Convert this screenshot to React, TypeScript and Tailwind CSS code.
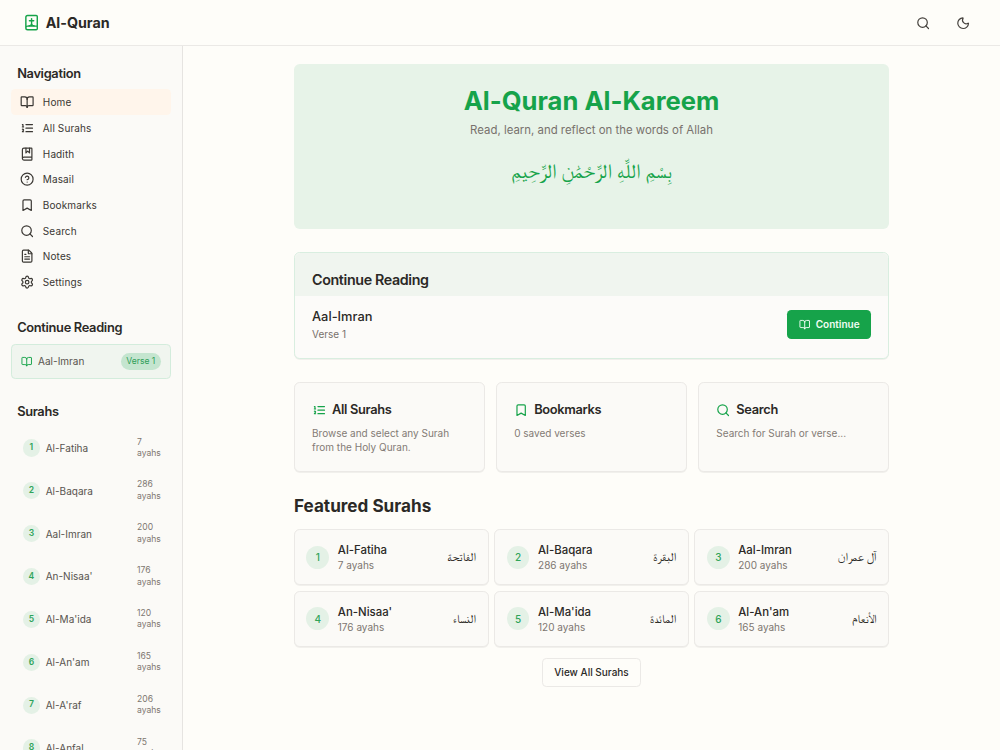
import type { ReactNode } from 'react';
import {
  BookMarked,
  BookOpen,
  Bookmark,
  CircleHelp,
  FileText,
  Moon,
  Search,
  Settings,
} from 'lucide-react';
import { clsx } from 'clsx';

type Icon = (props: { className?: string }) => ReactNode;

interface Surah {
  id: number;
  name: string;
  arabic: string;
  ayahs: number;
}

const SURAHS: Surah[] = [
  { id: 1, name: 'Al-Fatiha', arabic: 'الفاتحة', ayahs: 7 },
  { id: 2, name: 'Al-Baqara', arabic: 'البقرة', ayahs: 286 },
  { id: 3, name: 'Aal-Imran', arabic: 'آل عمران', ayahs: 200 },
  { id: 4, name: "An-Nisaa'", arabic: 'النساء', ayahs: 176 },
  { id: 5, name: "Al-Ma'ida", arabic: 'المائدة', ayahs: 120 },
  { id: 6, name: "Al-An'am", arabic: 'الأنعام', ayahs: 165 },
  { id: 7, name: "Al-A'raf", arabic: 'الأعراف', ayahs: 206 },
  { id: 8, name: 'Al-Anfal', arabic: 'الأنفال', ayahs: 75 },
];

function NumberedList({ className }: { className?: string }) {
  return (
    <svg
      viewBox="0 0 24 24"
      className={className}
      fill="none"
      stroke="currentColor"
      strokeWidth="2"
      strokeLinecap="round"
      strokeLinejoin="round"
    >
      <path d="M10 6h11M10 12h11M10 18h11" />
      <path d="M4 6h1v4M4 10h2" />
      <path d="M6 18H4c0-1 2-2 2-3s-1-1.500-2-1" />
    </svg>
  );
}

const NAV_ITEMS: { label: string; icon: Icon }[] = [
  { label: 'Home', icon: (p) => <BookOpen {...p} /> },
  { label: 'All Surahs', icon: NumberedList },
  { label: 'Hadith', icon: (p) => <BookMarked {...p} /> },
  { label: 'Masail', icon: (p) => <CircleHelp {...p} /> },
  { label: 'Bookmarks', icon: (p) => <Bookmark {...p} /> },
  { label: 'Search', icon: (p) => <Search {...p} /> },
  { label: 'Notes', icon: (p) => <FileText {...p} /> },
  { label: 'Settings', icon: (p) => <Settings {...p} /> },
];

function Logo() {
  return (
    <svg
      viewBox="0 0 24 24"
      className="size-6 text-[#16a34a]"
      fill="none"
      stroke="currentColor"
      strokeWidth="2"
      strokeLinecap="round"
      strokeLinejoin="round"
    >
      <path d="M4 19.5v-15A2.5 2.5 0 0 1 6.500 2H18.500A1.500 1.500 0 0 1 20 3.500v17a1.500 1.500 0 0 1-1.500 1.500H6.500a2.5 2.5 0 0 1 0-5H20" />
      <path d="M12 6.5V16" />
      <path d="M9 9.500h6" />
      <path d="M8.500 16.500c1.500 0 2.500-.8 3.500-2 1 1.200 2 2 3.500 2" />
    </svg>
  );
}

function Header() {
  return (
    <header className="flex h-[46.400px] shrink-0 items-center justify-between border-b border-[#ebe9e6] px-8">
      <div className="flex items-center gap-2">
        <Logo />
        <span className="text-xl font-bold">Al-Quran</span>
      </div>
      <div className="flex gap-4 text-[#44403c]">
        <button className="flex size-10 items-center justify-center">
          <Search className="size-5" />
        </button>
        <button className="flex size-10 items-center justify-center">
          <Moon className="size-5" />
        </button>
      </div>
    </header>
  );
}

function SidebarTitle({ children }: { children: ReactNode }) {
  return <h2 className="mb-2 px-2 text-lg font-semibold tracking-tight">{children}</h2>;
}

function Sidebar() {
  return (
    <aside className="flex w-[183px] shrink-0 flex-col gap-8 overflow-hidden border-r border-[#e6e4e1] bg-[#fbfaf7] px-4 pt-[17.400px]">
      <div>
        <SidebarTitle>Navigation</SidebarTitle>
        <nav>
          {NAV_ITEMS.map(({ label, icon: NavIcon }, i) => (
            <a
              key={label}
              className={clsx(
                'flex h-9 items-center gap-3 rounded-md px-3 text-sm tracking-[0.012em] text-[#3a3733]',
                i === 0 && 'bg-[#fff5eb]'
              )}
            >
              <NavIcon className="size-5" />
              {label}
            </a>
          ))}
        </nav>
      </div>

      <div>
        <SidebarTitle>Continue Reading</SidebarTitle>
        <div className="flex h-[35.500px] items-center gap-2 rounded-md border border-[#d3ecdc] bg-[#f0f5ef] px-3 text-sm text-[#57534e]">
          <BookOpen className="size-4 text-[#16a34a]" />
          <span className="flex-1">Aal-Imran</span>
          <span className="rounded-full bg-[#c4e5cf] px-2 py-1 text-xs text-[#2f9e58]">Verse 1</span>
        </div>
      </div>

      <div>
        <SidebarTitle>Surahs</SidebarTitle>
        <div className="-mt-[1.100px]">
          {SURAHS.map((surah) => (
            <div key={surah.id} className="flex h-15 items-center gap-2 pr-3 pl-4 text-sm text-[#57534e]">
              <span className="flex size-6 items-center justify-center rounded-full bg-[#e4f1e6] text-xs font-semibold text-[#2fa45a]">
                {surah.id}
              </span>
              <span className="flex-1">{surah.name}</span>
              <span className="w-[25px] text-xs text-[#7d7670]">{surah.ayahs} ayahs</span>
            </div>
          ))}
        </div>
      </div>
    </aside>
  );
}

function LinkCard({ icon: CardIcon, title, text }: { icon: Icon; title: string; text: string }) {
  return (
    <div className="rounded-lg border border-[#ebe9e6] bg-[#fbfaf7] px-[17px] pt-[17.600px] pb-[16.800px] shadow-2xs">
      <h3 className="mb-2 flex items-center gap-2 text-lg font-semibold tracking-tight">
        <CardIcon className="size-5 text-[#16a34a]" />
        {title}
      </h3>
      <p className="text-sm text-[#837b75]">{text}</p>
    </div>
  );
}

function SurahCard({ surah }: { surah: Surah }) {
  return (
    <div className="flex items-center gap-3 rounded-lg border border-[#ebe9e6] bg-[#fbfaf7] px-[11.400px] py-[11.800px] shadow-2xs">
      <span className="flex size-8 items-center justify-center rounded-full bg-[#e4f1e6] text-sm font-medium text-[#2fa45a]">
        {surah.id}
      </span>
      <div className="flex-1">
        <h3 className="text-base leading-[16px] font-medium">{surah.name}</h3>
        <p className="text-sm text-[#7d7670]">{surah.ayahs} ayahs</p>
      </div>
      <span dir="rtl" className="font-['FreeSerif','DejaVu_Sans',serif] text-[12.300px] leading-none">
        {surah.arabic}
      </span>
    </div>
  );
}

export default function App() {
  return (
    <div className="flex h-[750px] flex-col overflow-hidden bg-[#fefdf9] font-['Inter',sans-serif] text-[#2b2926] [--radius-lg:5.7px] [--radius-md:4.3px] [--spacing:2.857px] [--text-4xl:25.6px] [--text-2xl:17.143px] [--text-xl:14.286px] [--text-lg:12.857px] [--text-base:11.429px] [--text-sm:10px] [--text-xs:8.571px]">
      <Header />
      <div className="flex min-h-0 flex-1">
        <Sidebar />
        <main className="flex flex-1 justify-center pt-[17.600px]">
          <div className="flex w-[595px] flex-col gap-8">
            {/* Hero */}
            <section className="flex h-[165px] flex-col items-center rounded-lg bg-[#e7f3e8] pt-8 text-center">
              <h1 className="mb-[6.500px] text-4xl font-bold text-[#16a34a]">Al-Quran Al-Kareem</h1>
              <p className="text-base text-[#78716c]">Read, learn, and reflect on the words of Allah</p>
              <p
                dir="rtl"
                className="mt-5 font-['FreeSerif','DejaVu_Sans',serif] text-[20.400px] leading-[39px] text-[#16a34a]"
              >
                بِسْمِ اللَّهِ الرَّحْمَٰنِ الرَّحِيمِ
              </p>
            </section>

            {/* Last read position */}
            <section className="rounded-lg border border-[#d9eee0] bg-[#fcfbf9] shadow-2xs">
              <div className="rounded-t-lg bg-[#f0f5ef] px-[17px] pt-6 pb-2">
                <h2 className="text-xl font-semibold tracking-tight">Continue Reading</h2>
              </div>
              <div className="flex items-center justify-between px-[17px] pt-4 pb-[16.400px]">
                <div>
                  <h3 className="text-lg font-medium">Aal-Imran</h3>
                  <p className="text-sm text-[#78716c]">Verse 1</p>
                </div>
                <button className="flex h-10 items-center gap-2 rounded-md bg-[#16a34a] px-4 text-sm font-semibold text-[#f0fdf4]">
                  <BookOpen className="size-4" />
                  Continue
                </button>
              </div>
            </section>

            <section className="grid grid-cols-3 gap-4">
              <LinkCard icon={NumberedList} title="All Surahs" text="Browse and select any Surah from the Holy Quran." />
              <LinkCard icon={(p) => <Bookmark {...p} />} title="Bookmarks" text="0 saved verses" />
              <LinkCard icon={(p) => <Search {...p} />} title="Search" text="Search for Surah or verse..." />
            </section>

            <section>
              <h2 className="mb-4 text-2xl font-bold">Featured Surahs</h2>
              <div className="grid grid-cols-3 gap-2">
                {SURAHS.slice(0, 6).map((surah) => (
                  <SurahCard key={surah.id} surah={surah} />
                ))}
              </div>
              <div className="mt-4 flex justify-center">
                <button className="h-10 rounded-md border border-[#ebe9e6] px-4 text-sm font-medium">View All Surahs</button>
              </div>
            </section>
          </div>
        </main>
      </div>
    </div>
  );
}
